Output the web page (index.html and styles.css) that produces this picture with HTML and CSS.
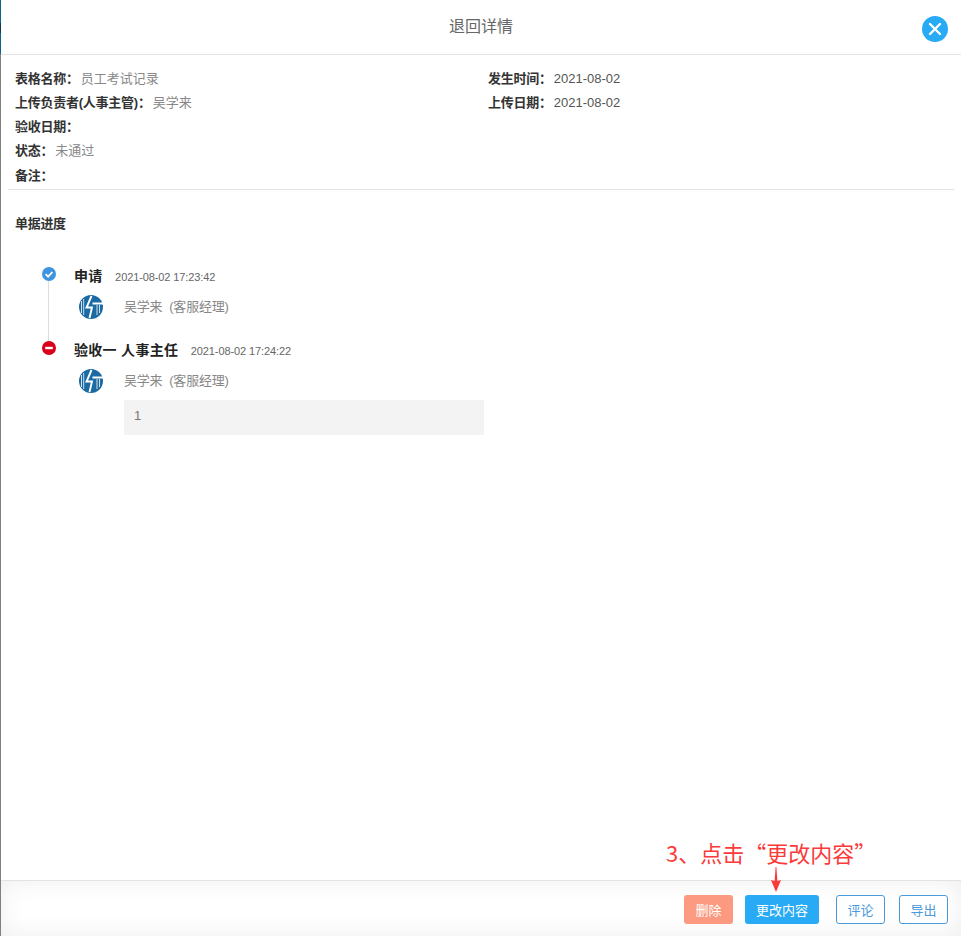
FILE: index.html
```html
<!DOCTYPE html>
<html lang="zh-CN">
<head>
    <meta charset="UTF-8">
    <title>退回详情</title>
    <link rel="stylesheet" href="styles.css">
</head>
<body>
    <div id="detail-dialog">
        <div class="dialog-header">
            <h1>退回详情</h1>
            <a class="close-btn">
                <svg width="26" height="26" viewBox="0 0 26 26"><circle cx="13" cy="13" r="13" fill="#29aaf4"/><path d="M8 8l10 10M18 8L8 18" stroke="#fff" stroke-width="2.4" stroke-linecap="round"/></svg>
            </a>
        </div>

        <div class="info-block">
            <div class="info-cols">
                <div class="info-col">
                    <p class="info-row"><b>表格名称：</b><span>员工考试记录</span></p>
                    <p class="info-row"><b>上传负责者(人事主管)：</b><span>吴学来</span></p>
                    <p class="info-row"><b>验收日期：</b></p>
                    <p class="info-row"><b>状态：</b><span>未通过</span></p>
                    <p class="info-row info-note"><b>备注：</b></p>
                </div>
                <div class="info-col col-right">
                    <p class="info-row"><b>发生时间：</b><span class="dark">2021-08-02</span></p>
                    <p class="info-row"><b>上传日期：</b><span class="dark">2021-08-02</span></p>
                </div>
            </div>
        </div>

        <div class="progress">
            <h2>单据进度</h2>
            <div class="step step-line">
                <svg class="step-dot" width="14" height="14" viewBox="0 0 14 14"><circle cx="7" cy="7" r="7" fill="#3f94e0"/><path d="M3.6 7.2l2.5 2.4 4.3-4.6" fill="none" stroke="#fff" stroke-width="1.8"/></svg>
                <div class="step-title"><b>申请</b><time>2021-08-02 17:23:42</time></div>
                <div class="step-user">
                    <svg class="logo" width="24" height="24" viewBox="0 0 24 24"><use href="#logo-mark"/></svg>
                    <span>吴学来&nbsp;&nbsp;(客服经理)</span>
                </div>
            </div>
            <div class="step">
                <svg class="step-dot" width="14" height="14" viewBox="0 0 14 14"><circle cx="7" cy="7" r="7" fill="#d9001b"/><rect x="3.2" y="5.8" width="7.6" height="2.4" fill="#fff"/></svg>
                <div class="step-title"><b>验收一 人事主任</b><time>2021-08-02 17:24:22</time></div>
                <div class="step-user">
                    <svg class="logo" width="24" height="24" viewBox="0 0 24 24"><use href="#logo-mark"/></svg>
                    <span>吴学来&nbsp;&nbsp;(客服经理)</span>
                </div>
                <div class="remark">1</div>
            </div>
        </div>

        <div class="dialog-footer">
            <button class="btn btn-delete">删除</button>
            <button class="btn btn-primary">更改内容</button>
            <button class="btn btn-plain btn-comment">评论</button>
            <button class="btn btn-plain">导出</button>
        </div>

        <div class="annotation">3、点击“更改内容”</div>
        <svg class="annotation-arrow" width="12" height="26" viewBox="0 0 12 26"><path d="M5.6 0h.8l1 14L11 13 6 25 1 13l3.600 1z" fill="#fb3a3a"/></svg>
    </div>

    <svg width="0" height="0" class="defs">
        <defs>
            <g id="logo-mark">
                <circle cx="12" cy="12" r="12" fill="#1c6aa4"/>
                <path d="M2.500 6v12M4.700 4v16M18 10v10M20.500 10v8" stroke="#fff" stroke-width="0.8"/>
                <path d="M12.500 1L7.500 12.500H13L10.500 23M13.500 8.500H24" fill="none" stroke="#fff" stroke-width="1.900"/>
            </g>
        </defs>
    </svg>
</body>
</html>
```

FILE: styles.css
```css
/* Global Styles */
* {
    margin: 0;
    padding: 0;
    box-sizing: border-box;
}
html, body {
    height: 100%;
}
body {
    font-family: "Liberation Sans", "Noto Sans CJK SC", sans-serif;
    background: #fff;
    overflow: hidden;
}
.defs {
    position: absolute;
}
#detail-dialog {
    position: relative;
    display: flex;
    flex-direction: column;
    height: 936px;
    border-left: 1px solid #808080;
}

/* Header */
.dialog-header {
    position: relative;
    height: 55px;
    border-bottom: 1px solid #e4e4e4;
    text-align: center;
}
.dialog-header::before {
    content: "";
    position: absolute;
    left: -1px;
    top: 0;
    width: 1px;
    height: 54px;
    background: linear-gradient(to bottom, #0b6394 23px, #12394f 23px, #12394f 33px, #0b6394 33px);
}
.dialog-header h1 {
    font-size: 16px;
    font-weight: normal;
    line-height: 54px;
    color: #666;
}
.close-btn {
    position: absolute;
    top: 16px;
    right: 13px;
    display: block;
    height: 26px;
}

/* Info Block */
.info-block {
    margin: 0 7px;
    padding: 12px 7px 0;
    height: 135px;
    border-bottom: 1px solid #e4e4e4;
}
.info-cols {
    display: flex;
}
.info-col {
    width: 473px;
    flex-shrink: 0;
}
.col-right {
    width: 440px;
}
.info-row {
    font-size: 13px;
    line-height: 24px;
    height: 24px;
    color: #888;
}
.info-note {
    margin-top: 1px;
}
.info-row b {
    color: #333;
    letter-spacing: -0.25px;
    margin-right: 2px;
}
.info-row .dark {
    color: #555;
}

/* Progress */
.progress {
    flex: 1;
    padding: 25px 14px 0;
}
.progress h2 {
    font-size: 13px;
    letter-spacing: -0.3px;
    line-height: 18px;
    color: #333;
    margin-bottom: 34px;
}
.step {
    position: relative;
    padding-left: 59px;
}
.step-line {
    height: 74px;
}
.step-line::before {
    content: "";
    position: absolute;
    left: 33px;
    top: 14px;
    width: 1px;
    height: 60px;
    background: #ddd;
}
.step-dot {
    position: absolute;
    left: 27px;
    top: 0;
}
.step-title {
    display: flex;
    align-items: baseline;
    height: 19px;
    line-height: 18px;
}
.step-title b {
    font-size: 14px;
    letter-spacing: 0.3px;
    color: #222;
    margin-right: 12.5px;
}
.step-title time {
    font-size: 11px;
    letter-spacing: -0.1px;
    color: #666;
}
.step-user {
    display: flex;
    align-items: center;
    height: 24px;
    margin-top: 9px;
    margin-left: 5px;
    font-size: 13px;
    color: #888;
}
.step-user .logo {
    margin-right: 21px;
}
.step-user span {
    margin-bottom: 4px;
    letter-spacing: -0.2px;
}
.remark {
    margin: 7px 0 0 50px;
    width: 360px;
    height: 35px;
    padding-left: 10px;
    line-height: 32px;
    font-size: 13px;
    color: #777;
    background: #f3f3f3;
}

/* Footer */
.dialog-footer {
    display: flex;
    justify-content: flex-end;
    align-items: flex-start;
    height: 56px;
    padding: 14px 13px 0 0;
    border-top: 1px solid #e2e2e2;
    background: #fff;
    box-shadow: inset 0 0 24px rgba(0, 0, 0, 0.07);
}
.btn {
    height: 29px;
    border-radius: 3px;
    font-family: inherit;
    font-size: 13px;
    border: none;
    cursor: pointer;
}
.btn-delete {
    width: 49px;
    margin-right: 12px;
    background: #fb9a80;
    color: #fff;
}
.btn-primary {
    width: 74px;
    margin-right: 17px;
    background: #29aaf4;
    color: #fff;
}
.btn-plain {
    width: 49px;
    background: #fff;
    border: 1px solid #4a9bdc;
    color: #4a9bdc;
}
.btn-comment {
    margin-right: 14px;
}

/* Screenshot Note */
.annotation {
    position: absolute;
    left: 665px;
    top: 834px;
    font-family: "Noto Sans CJK SC", sans-serif;
    font-size: 22px;
    line-height: 36px;
    color: #fb3a3a;
    white-space: nowrap;
}
.annotation-arrow {
    position: absolute;
    left: 769px;
    top: 867px;
}
```
